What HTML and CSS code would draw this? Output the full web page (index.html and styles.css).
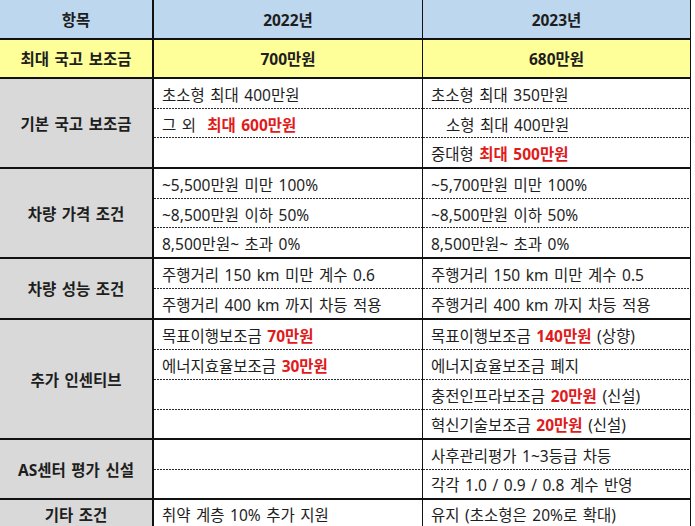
FILE: index.html
```html
<!DOCTYPE html>
<html lang="ko">
<head>
<meta charset="utf-8">
<link rel="stylesheet" href="styles.css">
</head>
<body>
<div class="sheet">
  <div class="c h k"><span>항목</span></div>
  <div class="c h m"><span>2022년</span></div>
  <div class="c h e"><span>2023년</span></div>

  <div class="c y k"><span>최대 국고 보조금</span></div>
  <div class="c y m"><span>700만원</span></div>
  <div class="c y e"><span>680만원</span></div>

  <div class="c k g s3"><span>기본 국고 보조금</span></div>
  <div class="c m t d"><span>초소형 최대 400만원</span></div>
  <div class="c e t d"><span>초소형 최대 350만원</span></div>
  <div class="c m t d pre"><span>그 외  <b class="red">최대 600만원</b></span></div>
  <div class="c e t d ind"><span>소형 최대 400만원</span></div>
  <div class="c m t end"></div>
  <div class="c e t end"><span>중대형 <b class="red">최대 500만원</b></span></div>

  <div class="c k g s3"><span>차량 가격 조건</span></div>
  <div class="c m t d"><span>~5,500만원 미만 100%</span></div>
  <div class="c e t d"><span>~5,700만원 미만 100%</span></div>
  <div class="c m t d"><span>~8,500만원 이하 50%</span></div>
  <div class="c e t d"><span>~8,500만원 이하 50%</span></div>
  <div class="c m t end"><span>8,500만원~ 초과 0%</span></div>
  <div class="c e t end"><span>8,500만원~ 초과 0%</span></div>

  <div class="c k g s2"><span>차량 성능 조건</span></div>
  <div class="c m t d"><span>주행거리 150 km 미만 계수 0.6</span></div>
  <div class="c e t d"><span>주행거리 150 km 미만 계수 0.5</span></div>
  <div class="c m t end"><span>주행거리 400 km 까지 차등 적용</span></div>
  <div class="c e t end"><span>주행거리 400 km 까지 차등 적용</span></div>

  <div class="c k g s4"><span>추가 인센티브</span></div>
  <div class="c m t d"><span>목표이행보조금 <b class="red">70만원</b></span></div>
  <div class="c e t d"><span>목표이행보조금 <b class="red">140만원</b> (상향)</span></div>
  <div class="c m t d"><span>에너지효율보조금 <b class="red">30만원</b></span></div>
  <div class="c e t d"><span>에너지효율보조금 폐지</span></div>
  <div class="c m t d"></div>
  <div class="c e t d"><span>충전인프라보조금 <b class="red">20만원</b> (신설)</span></div>
  <div class="c m t end"></div>
  <div class="c e t end"><span>혁신기술보조금 <b class="red">20만원</b> (신설)</span></div>

  <div class="c k g s2"><span>AS센터 평가 신설</span></div>
  <div class="c m t d"></div>
  <div class="c e t d"><span>사후관리평가 1~3등급 차등</span></div>
  <div class="c m t end"></div>
  <div class="c e t end"><span>각각 1.0 / 0.9 / 0.8 계수 반영</span></div>

  <div class="c k g"><span>기타 조건</span></div>
  <div class="c m t end"><span>취약 계층 10% 추가 지원</span></div>
  <div class="c e t end"><span>유지 (초소형은 20%로 확대)</span></div>
</div>
</body>
</html>
```

FILE: styles.css
```css
html, body {
  margin: 0;
  padding: 0;
  background: #ffffff;
}

body {
  font-family: "Noto Sans", "Noto Sans CJK KR", sans-serif;
  font-size: 15.5px;
  word-spacing: 1.5px;
  color: #1e1e1e;
}

.sheet {
  display: grid;
  grid-template-columns: 154px 269px 268px;
  grid-template-rows: 40px 39px 30px 29px 31px 30px 29px 31px 30px 31px 30px 30px 30px 30px 30px 30px 30px;
  width: 691px;
}

.c {
  box-sizing: border-box;
  display: flex;
  align-items: center;
  min-width: 0;
  white-space: nowrap;
  overflow: hidden;
}

.k {
  border-right: 2px solid #111;
  justify-content: center;
  font-weight: 700;
}

.m, .e {
  border-right: 1px solid #111;
}

.h {
  background: #bdd7ee;
  border-bottom: 2px solid #111;
  justify-content: center;
  font-weight: 700;
}

.y {
  background: #ffff99;
  border-bottom: 2px solid #111;
  justify-content: center;
  font-weight: 700;
}

.g {
  background: #d9d9d9;
  border-bottom: 2px solid #111;
}

.s2 { grid-row: span 2; }
.s3 { grid-row: span 3; }
.s4 { grid-row: span 4; }

.t {
  padding-left: 8px;
  padding-top: 1px;
}

.d {
  background-image: linear-gradient(90deg, #2a2a2a 2px, transparent 2px);
  background-size: 3px 1px;
  background-repeat: repeat-x;
  background-position: left bottom;
}

.end {
  border-bottom: 2px solid #111;
}

.pre span {
  white-space: pre;
}

.ind {
  padding-left: 23px;
}

.red {
  color: #e01b1b;
  font-weight: 700;
}
```
